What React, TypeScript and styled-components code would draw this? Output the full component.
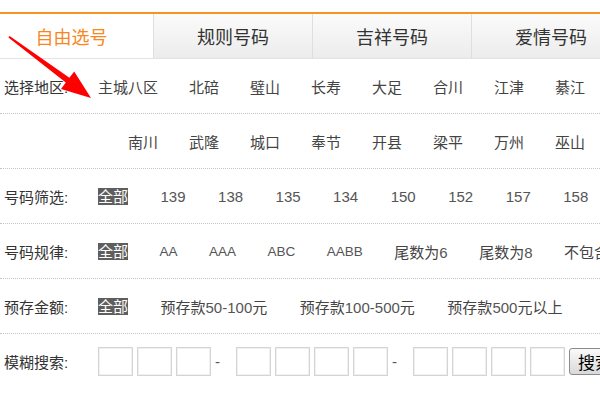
import { createGlobalStyle, styled } from "styled-components";

const GlobalStyle = createGlobalStyle`
  body {
    margin: 0;
    background: #fff;
    overflow: hidden;
    font-family: "Liberation Sans", "Noto Sans CJK SC", sans-serif;
  }
`;

const Page = styled.div`
  position: relative;
  width: 660px;
  padding-top: 12px;
`;

const TabBar = styled.div`
  display: flex;
  height: 44px;
  border-top: 2px solid #f7941d;
  border-bottom: 1px solid #e3e3e3;
`;

const Tab = styled.div<{ $active?: boolean }>`
  display: flex;
  align-items: center;
  justify-content: center;
  flex-shrink: 0;
  box-sizing: border-box;
  width: ${(p) => (p.$active ? "153px" : "159px")};
  padding-right: ${(p) => (p.$active ? "10px" : "0")};
  border-left: ${(p) => (p.$active ? "none" : "1px solid #dedede")};
  background: ${(p) => (p.$active ? "#fff" : "linear-gradient(#fbfbfb, #ececec)")};
  color: ${(p) => (p.$active ? "#f7871f" : "#333")};
  font-size: 18px;
`;

const Row = styled.div<{ $last?: boolean }>`
  display: flex;
  align-items: center;
  height: 54px;
  padding-left: 4px;
  border-bottom: ${(p) => (p.$last ? "none" : "1px dotted #c5c5c5")};
  white-space: nowrap;
`;

const Label = styled.div`
  width: 94px;
  flex-shrink: 0;
  font-size: 15px;
  color: #333;
`;

const Options = styled.div<{ $gap: number; $indent?: number }>`
  display: flex;
  align-items: center;
  gap: ${(p) => p.$gap}px;
  padding-left: ${(p) => p.$indent ?? 0}px;
`;

const Option = styled.span<{ $size?: number }>`
  font-size: ${(p) => p.$size ?? 15}px;
  color: #444;
`;

const Num = styled.span`
  color: #555;
`;

const Selected = styled.span`
  font-size: 15px;
  line-height: 17px;
  background: #5e5e5e;
  color: #fff;
`;

const Boxes = styled.div`
  display: flex;
  align-items: center;
`;

const Box = styled.input`
  width: 35px;
  height: 29px;
  box-sizing: border-box;
  margin: 0 4px 0 0;
  padding: 0;
  border: 1px solid #d4d4d4;
  box-shadow: inset 0 0 0 1px #f0f0f0;
  background: #fff;
`;

const Dash = styled.span`
  width: 5px;
  margin-right: 16px;
  font-size: 15px;
  color: #555;
`;

const SearchButton = styled.button`
  height: 27px;
  padding: 0 8px;
  border: 1px solid #8c8c8c;
  border-radius: 3px;
  background: linear-gradient(#fafafa, #d9d9d9);
  font-family: inherit;
  font-size: 17px;
  color: #000;
`;

const Arrow = styled.svg`
  position: absolute;
  left: 0;
  top: 0;
  pointer-events: none;
`;

const row1 = ["北碚", "璧山", "长寿", "大足", "合川", "江津", "綦江"];
const row2 = ["南川", "武隆", "城口", "奉节", "开县", "梁平", "万州", "巫山"];
const prefixes = ["139", "138", "135", "134", "150", "152", "157", "158"];

const App = () => {
  return (
    <Page>
      <GlobalStyle />
      <TabBar>
        <Tab $active>自由选号</Tab>
        <Tab>规则号码</Tab>
        <Tab>吉祥号码</Tab>
        <Tab>爱情号码</Tab>
      </TabBar>

      <Row>
        <Label>选择地区:</Label>
        <Options $gap={31}>
          <Option>主城八区</Option>
          {row1.map((d) => (
            <Option key={d}>{d}</Option>
          ))}
        </Options>
      </Row>
      <Row>
        <Label />
        <Options $gap={31} $indent={30}>
          {row2.map((d) => (
            <Option key={d}>{d}</Option>
          ))}
        </Options>
      </Row>

      <Row>
        <Label>号码筛选:</Label>
        <Options $gap={32.5}>
          <Selected>全部</Selected>
          {prefixes.map((n) => (
            <Option key={n}>
              <Num>{n}</Num>
            </Option>
          ))}
        </Options>
      </Row>

      <Row>
        <Label>号码规律:</Label>
        <Options $gap={31.5}>
          <Selected>全部</Selected>
          <Option $size={13.5}>
            <Num>AA</Num>
          </Option>
          <Option $size={13.5}>
            <Num>AAA</Num>
          </Option>
          <Option $size={13.5}>
            <Num>ABC</Num>
          </Option>
          <Option $size={13.5}>
            <Num>AABB</Num>
          </Option>
          <Option>
            尾数为<Num>6</Num>
          </Option>
          <Option>
            尾数为<Num>8</Num>
          </Option>
          <Option>
            不包含<Num>4</Num>
          </Option>
        </Options>
      </Row>

      <Row>
        <Label>预存金额:</Label>
        <Options $gap={32.5}>
          <Selected>全部</Selected>
          <Option>
            预存款<Num>50-100</Num>元
          </Option>
          <Option>
            预存款<Num>100-500</Num>元
          </Option>
          <Option>
            预存款<Num>500</Num>元以上
          </Option>
        </Options>
      </Row>

      <Row $last>
        <Label>模糊搜索:</Label>
        <Boxes>
          <Box />
          <Box />
          <Box />
          <Dash>-</Dash>
          <Box />
          <Box />
          <Box />
          <Box />
          <Dash>-</Dash>
          <Box />
          <Box />
          <Box />
          <Box />
          <SearchButton>搜索</SearchButton>
        </Boxes>
      </Row>

      <Arrow width="120" height="120" viewBox="0 0 120 120">
        <polygon
          points="9.6,36 69.4,77.8 74.2,71.4 91,98 61,89 65.8,82.6 8.4,37.6"
          fill="#f00"
        />
      </Arrow>
    </Page>
  );
};

export default App;
